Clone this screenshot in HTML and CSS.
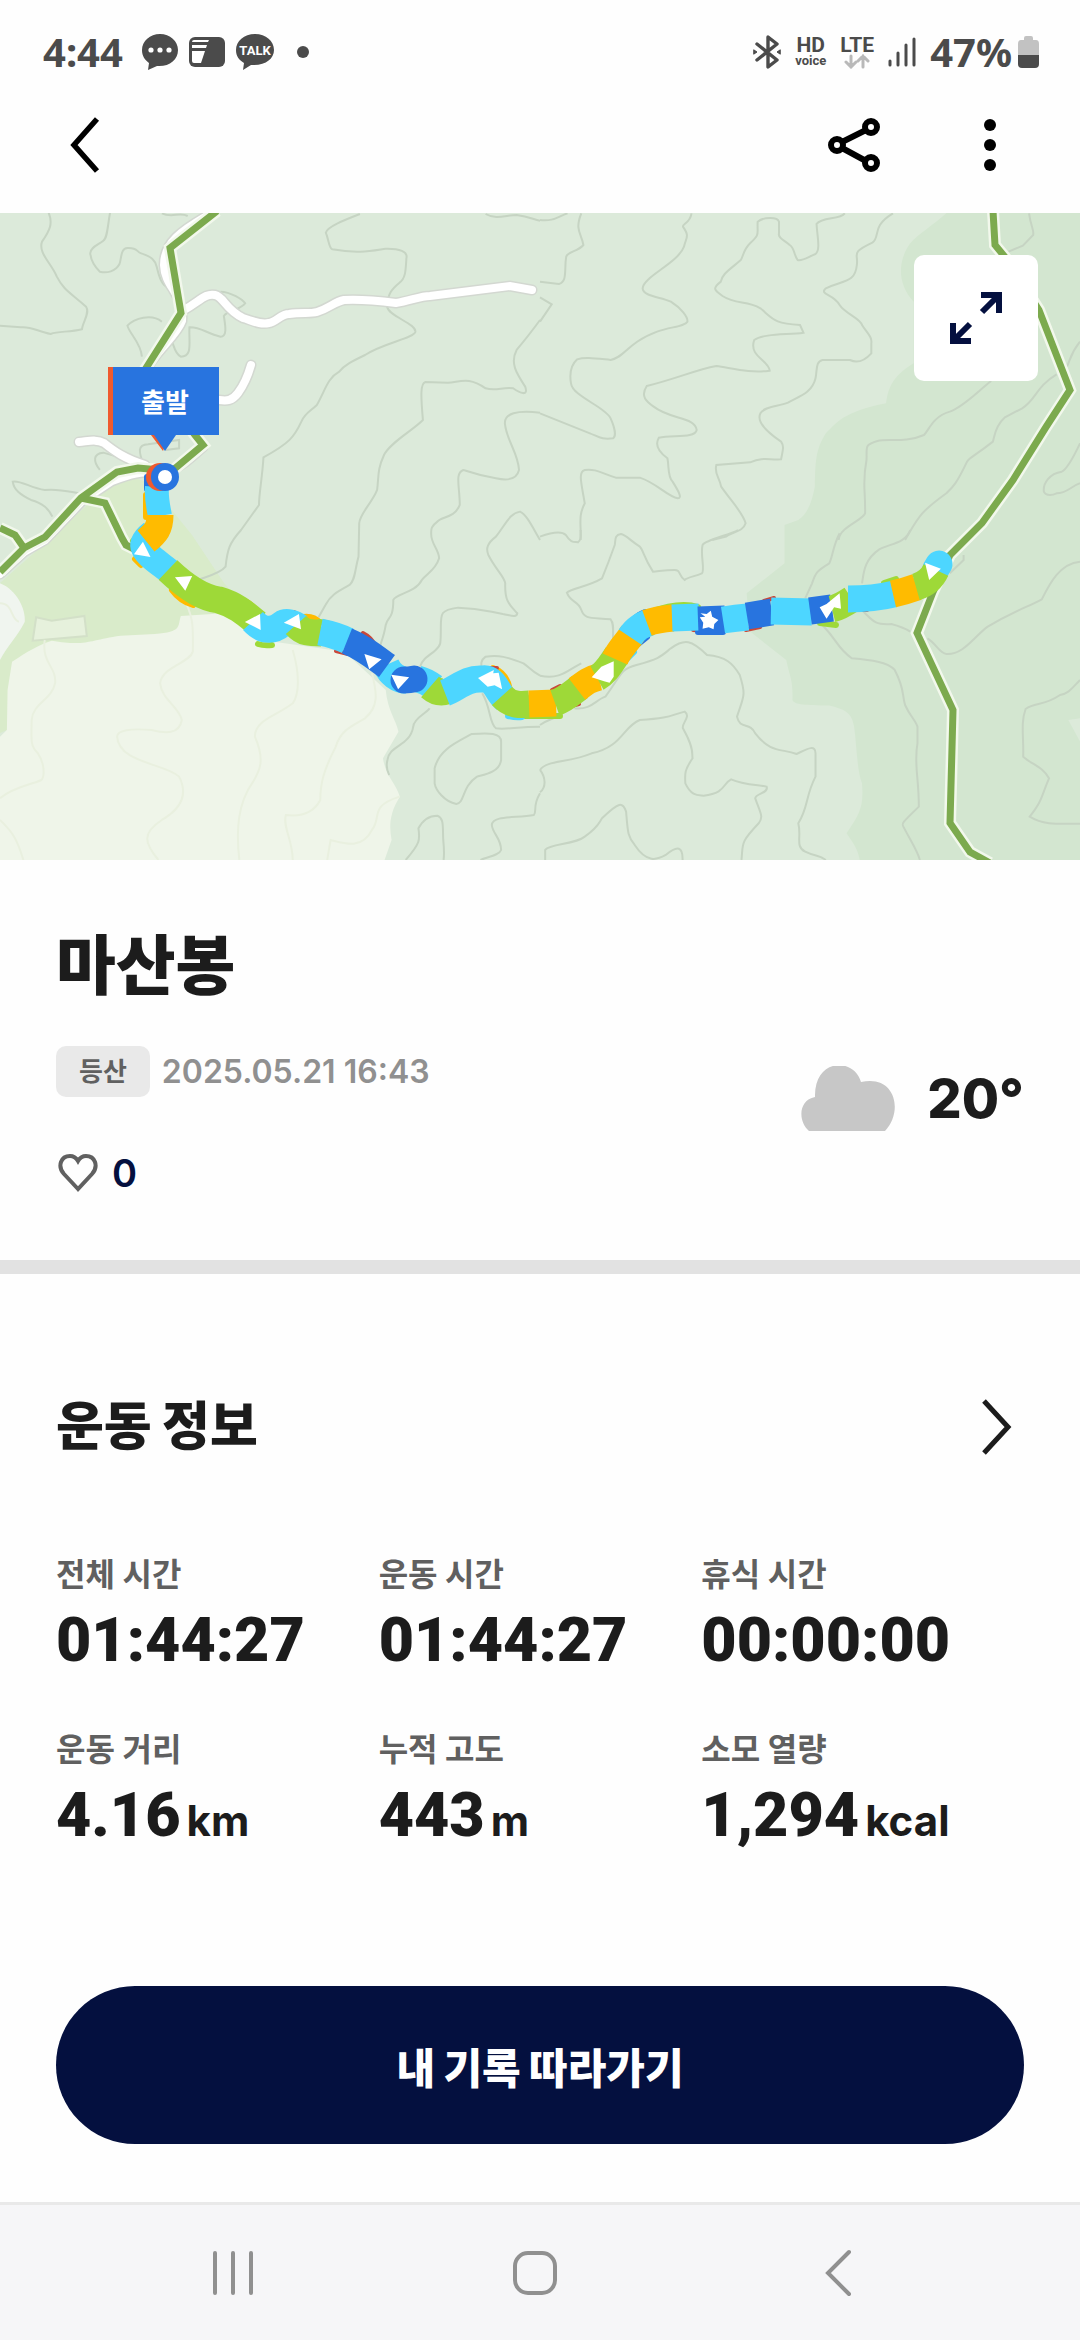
FILE: index.html
```html
<!DOCTYPE html>
<html lang="ko">
<head>
  <meta charset="UTF-8">
  <meta name="viewport" content="width=device-width, initial-scale=1.0">
  <title>마산봉</title>
  <link rel="stylesheet" href="styles.css">
</head>
<body>

<!-- Status bar -->
<div class="status-bar">
  <div class="status-group">
    <span class="status-text clock">4:44</span>
    <svg width="36" height="36" viewBox="0 0 36 36">
      <path d="M18 0C8 0 0 7 0 16c0 6 3 10 7 13L6 36l9-4c12 1 21-6 21-16C36 7 28 0 18 0z" fill="#4b4b4b"/>
      <g fill="#fff"><circle cx="9" cy="16" r="2.6"/><circle cx="18" cy="16" r="2.6"/><circle cx="27" cy="16" r="2.6"/></g>
    </svg>
    <svg width="36" height="30" viewBox="0 0 36 30">
      <rect width="36" height="30" rx="6" fill="#4b4b4b"/>
      <path d="M5 3h15l-1 2H3q0-2 2-2zM3 8h15l-1 3H3zM3 14h13l-4 12H5q-2 0-2-2z" fill="#fff"/>
    </svg>
    <span class="talk">
      <svg width="38" height="36" viewBox="0 0 38 36">
        <path d="M19 0C8 0 0 7 0 16c0 6 3 10 8 13L7 36l8-5c14 1 23-6 23-15C38 7 30 0 19 0z" fill="#4b4b4b"/>
        <text x="19" y="21" text-anchor="middle" class="talk-text">TALK</text>
      </svg>
    </span>
    <span class="more-dot"></span>
  </div>
  <div class="status-group status-right">
    <svg width="28" height="34" viewBox="0 0 28 34" fill="none" stroke="#4b4b4b" stroke-width="3.4" stroke-linejoin="round" stroke-linecap="round">
      <path d="M4 9l20 16-9 7V2l9 7L4 25"/>
      <path d="M1 15l3 2-3 2zM27 15l-3 2 3 2z" fill="#4b4b4b" stroke-width="1"/>
    </svg>
    <span class="net"><span class="net-top">HD</span><span class="net-sub">voice</span></span>
    <span class="net">
      <span class="net-top">LTE</span>
      <svg width="26" height="15" viewBox="0 0 26 15" fill="none" stroke="#b9b9b9" stroke-width="3" stroke-linecap="round">
        <path d="M7 2v11M2 8l5 5 5-5M19 13V2M14 7l5-5 5 5"/>
      </svg>
    </span>
    <svg width="28" height="30" viewBox="0 0 28 30" stroke="#4b4b4b" stroke-width="3" stroke-linecap="round">
      <path d="M2 24v4M10 16v12M18 8v20M26 2v26"/>
    </svg>
    <span class="battery">
      <span class="status-text">47%</span>
      <svg width="21" height="32" viewBox="0 0 21 32">
        <path d="M6 2q0-2 2-2h5q2 0 2 2v2h3q3 0 3 4v12H0V8q0-4 3-4h3z" fill="#c2c2c2"/>
        <path d="M0 19h21v9q0 4-4 4H4q-4 0-4-4z" fill="#4b4b4b"/>
      </svg>
    </span>
  </div>
</div>

<!-- App header -->
<header class="app-header">
  <button type="button" class="icon-btn" aria-label="뒤로">
    <svg width="30" height="56" viewBox="0 0 30 56" fill="none" stroke="#000" stroke-width="5.5"><path d="M27 2L4 28l23 26"/></svg>
  </button>
  <div class="header-actions">
    <button type="button" class="icon-btn" aria-label="공유">
      <svg width="52" height="54" viewBox="0 0 52 54" fill="none" stroke="#000" stroke-width="6">
        <circle cx="9" cy="27" r="6"/><circle cx="43" cy="9" r="6"/><circle cx="43" cy="45" r="6"/>
        <path d="M14 24l24-12M14 30l24 13"/>
      </svg>
    </button>
    <button type="button" class="icon-btn" aria-label="더보기">
      <svg width="12" height="52" viewBox="0 0 12 52"><circle cx="6" cy="6" r="6"/><circle cx="6" cy="26" r="6"/><circle cx="6" cy="46" r="6"/></svg>
    </button>
  </div>
</header>

<main>
  <!-- Route map -->
  <div class="map">
    <svg class="map-canvas" viewBox="0 0 1080 647">
      <rect width="1080" height="647" fill="#dceada"/>

      <!-- land areas -->
      <path d="M52 324L95 285 125 262 150 270 192 322 224 370 260 410 0 520V370z" fill="#d9ebca"/>
      <g transform="matrix(.3444 0 0 .3333 540 -3)">
        <path d="M1190 0C1150 40 1100 70 1075 100C1040 150 1035 220 1085 275V460C1020 500 1010 540 1005 580C880 605 860 640 830 670C800 720 800 750 798 830C790 870 780 910 750 930L710 945V1060L600 1150 610 1265 715 1350C725 1400 735 1410 733 1470C740 1485 770 1485 840 1487C890 1500 905 1510 912 1550C920 1610 920 1680 935 1720C940 1790 930 1810 890 1870C910 1900 925 1920 930 1960H1580V0z" fill="#d3e6d0"/>
        <path d="M1534 1530l34-5v70z" fill="#dceada"/>
      </g>
      <g transform="matrix(.3444 0 0 .3333 0 317)">
        <path d="M0 620L20 600 22 480 35 395C80 365 110 345 150 332C250 350 260 330 350 317L450 312C530 305 515 290 525 258L650 250 760 330 1000 365 1120 480C1125 540 1150 570 1157 605L1112 685C1120 740 1150 760 1161 800C1130 850 1130 890 1137 930L1115 995H0z" fill="#eff5e9"/>
        <path d="M0 160C50 180 75 240 72 275C50 320 20 350 0 390z" fill="#f0f5ef"/>
        <path d="M105 262l45 10 95-14 7 60-157 14z" fill="#e6f1dc" stroke="#d3e0c8" stroke-width="6"/>
      </g>

      <!-- contour lines -->
      <g class="contour" transform="matrix(.3444 0 0 .3333 0 -3)">
        <path d="M140 5C155 40 145 60 122 95C110 130 150 160 165 200C185 240 200 245 250 290C262 310 240 335 238 358C200 368 170 362 147 372C110 365 90 348 60 352L0 347"/>
        <path d="M320 5C312 50 312 85 300 92C285 105 262 112 262 130C265 160 280 175 290 185C310 190 335 185 347 162C353 145 350 115 370 114C400 112 395 125 410 130C440 140 450 150 455 170C462 200 470 230 492 234"/>
        <path d="M470 10C500 25 520 5 545 18"/>
        <path d="M1045 12C1000 30 950 50 946 68C955 90 955 115 965 118C1040 132 1080 122 1120 116C1160 115 1185 125 1180 145C1178 180 1178 205 1160 218C1140 235 1125 250 1124 290C1128 320 1210 340 1206 366C1200 385 1110 400 1060 435C1020 455 1000 465 985 485C950 505 945 540 920 585C900 605 885 610 875 635C855 680 840 700 765 742C762 800 752 850 752 885L700 960C665 1000 660 1020 655 1070C640 1090 600 1100 575 1110"/>
        <path d="M1410 12C1440 30 1470 15 1500 15C1540 20 1550 30 1568 32"/>
        <path d="M1568 330C1540 370 1520 395 1500 420C1480 460 1500 490 1525 530C1535 560 1510 550 1490 535C1460 530 1440 545 1410 535C1360 500 1340 515 1300 518L1235 516C1220 520 1222 560 1228 630C1200 660 1130 700 1115 735C1095 780 1100 800 1095 840C1080 880 1045 910 1043 940L1041 1040C1030 1080 1032 1110 1015 1125C980 1145 960 1155 945 1185L925 1222"/>
        <path d="M1568 608C1500 600 1465 610 1466 640C1470 690 1505 730 1507 780C1500 810 1470 812 1440 805C1380 795 1350 780 1345 780C1320 790 1335 830 1335 885C1320 925 1280 920 1270 935C1250 950 1252 960 1252 970C1250 1000 1275 1020 1275 1045C1265 1080 1240 1090 1225 1110C1205 1150 1150 1150 1142 1170C1142 1230 1125 1220 1120 1245C1115 1280 1105 1300 1100 1320"/>
        <path d="M1568 990C1545 950 1530 915 1510 905C1480 910 1470 940 1440 980C1415 1000 1410 1015 1418 1035C1440 1080 1465 1100 1467 1120C1465 1175 1480 1185 1502 1210C1500 1225 1480 1215 1460 1212C1400 1200 1390 1195 1330 1193C1280 1200 1280 1210 1280 1250C1280 1310 1280 1305 1260 1325C1240 1340 1225 1350 1220 1370"/>
        <path d="M640 245C670 245 705 270 712 280C700 300 660 300 650 318C655 350 660 380 640 380C600 370 580 350 550 352C548 400 560 440 525 440C505 430 505 400 495 385"/>
        <path d="M412 440C410 400 375 370 370 347C390 325 440 310 470 335"/>
        <path d="M152 920C140 895 125 880 90 870C60 855 40 840 37 815C60 810 90 835 130 840C170 835 200 845 240 852"/>
        <path d="M290 780C270 755 270 730 300 728L340 740M420 775C400 720 400 705 430 703L520 690V715L480 720"/>
      </g>
      <g class="contour" transform="matrix(.3444 0 0 .3333 0 317)">
        <path d="M1568 437C1540 420 1535 410 1520 400C1470 380 1450 375 1410 380C1390 395 1400 410 1400 430"/>
        <path d="M1400 490C1425 530 1420 580 1440 595C1470 600 1500 590 1568 590"/>
        <path d="M1370 612C1420 608 1455 608 1455 635V690C1450 730 1400 735 1385 740C1340 770 1350 820 1325 822C1290 815 1265 780 1262 760V715C1275 660 1320 640 1370 612z"/>
        <path d="M1178 990C1220 940 1220 930 1215 895C1230 865 1250 857 1270 857C1290 865 1285 890 1287 930C1290 960 1290 975 1288 990"/>
        <path d="M1568 790C1545 830 1560 845 1550 855C1500 865 1430 855 1428 885C1430 910 1455 925 1455 960C1450 975 1420 980 1395 990"/>
        <path d="M1247 535C1245 545 1200 565 1200 590C1190 650 1130 645 1125 690C1120 710 1125 725 1130 735"/>
      </g>
      <g class="contour contour-pale" transform="matrix(.3444 0 0 .3333 0 317)">
        <path d="M530 200C565 260 560 300 560 365C550 400 470 410 465 460C470 510 520 530 528 570C520 615 480 610 440 600C380 595 340 600 340 620C345 700 480 700 520 740C550 800 520 840 470 870C410 910 420 940 460 990"/>
        <path d="M130 330C120 400 165 410 160 460C150 510 95 520 92 570C90 640 90 650 110 670C130 700 130 740 120 750C90 765 40 770 0 805"/>
        <path d="M850 360C870 430 870 490 850 520C800 560 740 570 740 620C770 690 755 720 735 755C690 820 685 900 695 990"/>
        <path d="M1080 430C1095 490 1100 530 1060 565C1020 590 990 600 975 650C940 720 930 760 930 810C910 850 870 860 830 855C820 890 850 930 850 990"/>
        <path d="M1160 800C1070 830 1110 860 1080 900C1050 960 1000 940 960 930L950 990M0 870C40 910 50 930 68 990M0 220C40 220 30 270 55 275"/>
      </g>
      <g class="contour" transform="matrix(.3444 0 0 .3333 540 -3)">
        <path d="M0 30C40 35 50 20 80 10M120 10C100 60 120 70 126 105C110 125 80 125 76 140C70 180 80 215 55 222L0 215M0 262L34 283 0 335"/>
        <path d="M440 10C435 40 415 40 415 50C435 80 425 80 418 110C400 160 300 200 298 235C300 260 350 260 380 275C410 295 430 320 428 335C420 350 380 350 340 365C250 400 250 440 205 450C160 445 130 440 108 448C90 465 85 490 90 520C95 560 190 590 205 625C220 660 220 680 212 685C180 690 170 680 145 670L0 610"/>
        <path d="M885 10C870 30 820 20 803 42C805 80 815 120 800 132C780 140 760 155 748 150C735 130 740 115 725 105C710 90 690 85 694 70V35C690 20 650 20 632 35C630 75 640 70 610 100C590 120 590 140 583 150C550 180 530 190 525 215C500 235 505 240 530 258C570 285 600 270 640 295C680 330 680 340 755 345L765 368C720 375 650 370 622 390C605 440 665 450 667 482C610 490 560 475 512 468C450 480 400 505 310 528C290 560 310 575 330 590C380 630 450 620 455 660C450 685 390 675 345 683C330 710 350 730 370 745C375 770 370 800 385 815C400 840 415 865 400 865C370 860 340 820 290 803H220C180 790 160 775 130 780C110 785 120 820 130 880C110 920 120 940 118 990"/>
        <path d="M1025 10C960 50 990 80 965 98C900 130 925 130 920 165C915 220 880 210 830 235C810 255 850 250 870 285C885 310 930 325 935 345C950 370 965 380 962 400V430C940 455 920 460 900 450H820C800 455 805 480 800 505C790 550 750 560 720 578C690 590 650 590 640 610C630 630 650 660 700 695C710 710 705 720 700 748C660 750 650 740 610 757L512 765C505 790 520 800 526 830C560 880 590 910 597 940C590 965 560 965 540 980L500 990"/>
        <path d="M1310 513C1270 545 1230 590 1190 605C1140 620 1130 660 1115 675C1060 700 1010 685 980 693C940 705 950 710 948 750C935 820 945 830 944 910C940 930 870 950 867 990"/>
        <path d="M1568 395C1540 430 1540 450 1530 470M1500 493C1440 530 1440 570 1400 595L1350 622C1320 650 1320 680 1315 695C1260 740 1250 740 1240 755C1210 820 1200 830 1180 850C1100 910 1100 920 1060 990"/>
        <path d="M1420 10C1425 50 1435 60 1432 75L1402 107 1360 125M1568 700C1545 750 1525 780 1515 785C1480 790 1460 820 1463 845C1470 860 1490 855 1500 850C1530 850 1540 830 1568 820"/>
      </g>
      <g class="contour" transform="matrix(.3444 0 0 .3333 540 317)">
        <path d="M0 20C40 5 65 5 75 15C90 40 100 35 110 37C120 30 118 20 118 0"/>
        <path d="M575 0C550 15 480 30 472 45C465 75 480 120 470 130C450 140 430 140 420 150C400 135 410 120 390 120C360 120 340 125 328 125C300 80 300 60 290 50C260 30 250 15 235 12C215 15 220 30 217 45C205 80 190 120 180 145C140 170 90 175 78 188C90 220 110 210 120 240C130 270 150 262 205 268C215 280 212 300 212 330"/>
        <path d="M870 10C850 50 850 80 840 100C800 125 800 130 790 160L770 205M1075 0C1060 40 1020 40 985 58C940 90 940 130 935 160"/>
        <path d="M0 437C60 450 80 420 120 400M100 535C150 540 160 510 190 500C240 430 230 420 280 405C350 385 350 380 380 355C420 325 440 330 485 375C540 380 560 400 580 435C600 500 590 500 572 560C580 600 610 575 625 610C670 670 700 655 745 672C770 660 800 640 800 670V740C770 800 780 830 750 880C760 920 740 950 770 965C800 980 810 975 830 990"/>
        <path d="M0 585C20 570 30 570 45 562M0 720C20 690 80 700 150 670C240 650 240 590 290 570C380 565 380 555 420 545C440 560 410 580 415 595C450 660 440 670 443 685C420 720 420 730 422 760C440 800 460 795 475 797C540 790 530 760 555 748C590 765 640 765 658 770C665 790 625 790 625 805C640 850 650 860 635 880C580 940 590 940 585 990"/>
        <path d="M0 720C15 740 20 770 0 787M15 990V960C30 940 100 945 130 920C170 890 170 880 180 865C230 815 240 815 250 845C255 910 255 920 275 945C310 1000 340 990 365 975C400 945 415 950 414 990"/>
        <path d="M820 285C870 340 860 350 905 385C960 390 1010 395 1030 420C1060 480 1050 490 1060 525C1075 560 1090 570 1096 590V640C1085 700 1100 740 1100 830C1050 880 1050 880 1055 890C1080 940 1095 960 1103 990"/>
        <path d="M935 240C970 280 980 285 1020 282C1050 290 1060 295 1075 305M1125 325C1150 340 1160 370 1180 372C1230 375 1260 320 1300 290C1380 240 1420 230 1457 208C1480 160 1510 100 1568 95M1230 75V90L1190 130"/>
        <path d="M1568 450C1540 480 1535 490 1510 495C1460 530 1440 515 1410 537C1395 580 1405 620 1403 680C1430 705 1460 710 1478 745C1455 800 1460 810 1422 860C1460 885 1500 882 1568 881"/>
      </g>

      <!-- minor roads -->
      <g class="road-edge">
        <path d="M184 97C200 88 205 80 215 82C224 84 225 96 243 105C253 108 260 112 269 110C276 109 281 101 289 101C302 99 310 101 317 99C330 95 334 89 344 87C360 86 380 88 396 90C410 88 420 83 430 83L510 73 532 77M251 152C247 166 244 172 238 180C232 188 227 188 219 187M79 229C90 228 96 226 104 230C114 238 125 246 145 252"/>
        <path d="M212 0C180 18 164 30 164 52C165 75 184 80 182 108C176 125 150 142 143 165L180 160"/>
        <path d="M203 234C190 245 180 256 165 259C140 258 130 261 112 268L82 288 45 327 24 339 0 361"/>
      </g>
      <g class="road-white">
        <path d="M184 97C200 88 205 80 215 82C224 84 225 96 243 105C253 108 260 112 269 110C276 109 281 101 289 101C302 99 310 101 317 99C330 95 334 89 344 87C360 86 380 88 396 90C410 88 420 83 430 83L510 73 532 77M251 152C247 166 244 172 238 180C232 188 227 188 219 187M79 229C90 228 96 226 104 230C114 238 125 246 145 252"/>
        <path d="M212 0C180 18 164 30 164 52C165 75 184 80 182 108C176 125 150 142 143 165L180 160"/>
        <path d="M203 234C190 245 180 256 165 259C140 258 130 261 112 268L82 288 45 327 24 339 0 361"/>
      </g>

      <!-- trails -->
      <g class="trail-case">
        <path d="M217-2L170 35 181 100 146 155 195 222 203 232 172 258 138 255 117 259 81 285 45 324 24 335 0 359M81 285l24 5 17 35 4 7 10 5M0 315l15 7 9 13"/>
        <path d="M993-2L995 32 1005 44 1039 97 1070 177 1046 214 1013 267 982 310 950 342 933 379 917 420 953 497 950 610 970 639 990 650"/>
      </g>
      <g class="trail">
        <path d="M217-2L170 35 181 100 146 155 195 222 203 232 172 258 138 255 117 259 81 285 45 324 24 335 0 359M81 285l24 5 17 35 4 7 10 5M0 315l15 7 9 13"/>
        <path d="M993-2L995 32 1005 44 1039 97 1070 177 1046 214 1013 267 982 310 950 342 933 379 917 420 953 497 950 610 970 639 990 650"/>
      </g>

      <!-- earlier passes showing past the edge of the track -->
      <g class="pass">
        <path class="orange" d="M146 282v22M135 346l6 6M172 377Q180 388 193 392M240 386Q250 389 257 398M304 404Q314 403 320 410M493 455Q507 460 510 477"/>
        <path class="green" d="M141 320l-8 8M320 409Q334 411 346 418M258 431Q264 433 272 432M510 503L560 503M650 399Q680 388 698 394M884 370L896 366M820 410l16 2"/>
        <path class="cyan" d="M508 503q8 2 14 1M626 447l8-8"/>
        <path class="red" d="M284 399h10M336 438l12 3M363 420q8 4 12 12M463 462l6-3M489 455l8 0M552 477l8-4M571 493l8-2M693 417l14 1M702 396h13M764 388l10-3M746 417l14-3M859 397h8"/>
        <path class="blue" d="M147 264v12M633 407q6-6 12-8M637 432l10-8M698 419l25 0"/>
      </g>

      <!-- recorded track, coloured by pace -->
      <g class="track">
        <path class="cyan" d="M157 274C156 285 158 292 160 303" stroke-width="24"/>
        <path class="cyan" d="M152 320C134 334 146 340 169 358" stroke-width="26"/>
        <path class="orange" d="M160 302C160 315 156 320 146 328"/>
        <path class="green" d="M168 357C190 378 205 385 219 387C236 392 245 400 257 410"/>
        <path class="cyan" d="M253 408C264 420 275 417 282 411C286 408 294 410 299 414"/>
        <path class="green" d="M296 412C303 420 310 420 321 420"/>
        <path class="cyan" d="M320 419C330 421 340 424 348 428"/>
        <path class="cyan" d="M386 452C390 461 398 467 406 467"/>
        <path class="blue" d="M347 428C362 434 372 442 387 453"/>
        <path class="cyan" d="M418 466Q426 468 434 474"/>
        <path class="blue" d="M404 467Q410 467 414 466" stroke-linecap="round"/>
        <path class="green" d="M430 474Q438 481 447 478"/>
        <path class="cyan" d="M445 480C458 475 466 465 482 466C495 464 497 480 505 486"/>
        <path class="green" d="M502 483C511 493 522 492 530 491"/>
        <path class="orange" d="M529 491L556 490"/>
        <path class="green" d="M555 490C566 486 572 480 580 474"/>
        <path class="orange" d="M577 476C586 469 590 466 599 464"/>
        <path class="green" d="M597 465C606 460 610 452 617 442"/>
        <path class="orange" d="M615 446C620 435 626 431 633 420"/>
        <path class="cyan" d="M630 424C636 415 642 412 650 409"/>
        <path class="orange" d="M647 410C655 407 662 406 673 405"/>
        <path class="cyan" d="M672 405L699 404"/>
        <path class="blue" d="M698 407L725 406"/>
        <path class="cyan" d="M723 407Q736 405 748 404"/>
        <path class="blue" d="M747 403L772 399"/>
        <path class="cyan" d="M771 398L812 399"/>
        <path class="blue" d="M810 398L832 395"/>
        <path class="green" d="M832 396Q840 394 852 386"/>
        <path class="cyan" d="M848 386Q874 386 894 381"/>
        <path class="cyan" d="M936 356l3-5" stroke-linecap="round"/>
        <path class="orange" d="M893 381Q906 378 917 374"/>
        <path class="green" d="M916 374Q930 370 936 357"/>
      </g>

      <!-- direction arrows -->
      <g fill="#fff" transform="matrix(.3444 0 0 .3333 0 317)">
        <path d="M415 35l22 46-48-8zM508 142l50-4-20 44zM755 252l2 48-46-24zM868 252l6 46-50-20zM1058 372l50 16-36 30zM1136 434l52 8-32 36zM1388 444l46-24-2 10 16-2 10 50-22-12-20 4z"/>
      </g>
      <g fill="#fff" transform="matrix(.3444 0 0 .3333 540 317)">
        <path d="M150 442l28-32 36-16v46l-12 18-16-4zM466 250l18 2 12-10 4 18 18 10-12 12-2 16-14-6-18 4 2-18-10-16 16-2zM812 232l20-10 38-32 4 46-20-4-22 34zM1118 98l46 18-34 34z"/>
      </g>

      <!-- start marker -->
      <circle cx="160" cy="264" r="14" fill="#ef5a2e"/>
      <circle cx="165" cy="264" r="14" fill="#2874df"/>
      <circle cx="165" cy="264" r="7" fill="#fff"/>
      <path d="M108 154h106v68h-45l-6 16-12-16h-43z" fill="#ef5a2e"/>
      <path d="M113 154h106v68h-43l-11 16-11-16h-41z" fill="#2874df"/>
      <text x="165" y="199" text-anchor="middle" class="pin-text">출발</text>
    </svg>
    <button type="button" class="expand-btn" aria-label="지도 확대">
      <svg width="60" height="60" viewBox="0 0 60 60" fill="none" stroke="#04103f" stroke-width="6">
        <path d="M35 7h18v18M53 7L36 24M25 53H7V35M7 53l17-17"/>
      </svg>
    </button>
  </div>

  <!-- Summary -->
  <section class="summary">
    <h1>마산봉</h1>
    <div class="summary-row">
      <div class="summary-left">
        <div class="meta">
          <span class="badge">등산</span>
          <time class="date" datetime="2025-05-21T16:43">2025.05.21 16:43</time>
        </div>
        <button type="button" class="like" aria-label="좋아요 0">
          <svg width="40" height="38" viewBox="0 0 40 38" fill="none" stroke="#606060" stroke-width="4">
            <path d="M20 35L6 20C-1 12 3 2 12 2Q17 2 20 7Q23 2 28 2C37 2 41 12 34 20z"/>
          </svg>
          <span>0</span>
        </button>
      </div>
      <div class="weather">
        <svg width="94" height="65" viewBox="0 0 94 65">
          <path d="M8 65C-3 56-3 34 14 31C13-8 53-9 60 16C94 8 103 45 84 65z" fill="#c7c7c7"/>
        </svg>
        <span class="temp">20°</span>
      </div>
    </div>
  </section>

  <!-- Workout info -->
  <section class="workout">
    <a href="#" class="workout-head">
      <h2>운동 정보</h2>
      <svg width="30" height="56" viewBox="0 0 30 56" fill="none" stroke="#1c1c1c" stroke-width="5"><path d="M2 2l24 26L2 54"/></svg>
    </a>
    <dl class="stats">
      <div><dt>전체 시간</dt><dd>01:44:27</dd></div>
      <div><dt>운동 시간</dt><dd>01:44:27</dd></div>
      <div><dt>휴식 시간</dt><dd>00:00:00</dd></div>
      <div><dt>운동 거리</dt><dd>4.16<span class="unit">km</span></dd></div>
      <div><dt>누적 고도</dt><dd>443<span class="unit">m</span></dd></div>
      <div><dt>소모 열량</dt><dd>1,294<span class="unit">kcal</span></dd></div>
    </dl>
    <button type="button" class="follow-btn">내 기록 따라가기</button>
  </section>
</main>

<!-- System navigation -->
<nav class="sys-nav">
  <button type="button" aria-label="최근 앱">
    <svg width="42" height="46" viewBox="0 0 42 46" stroke="#909090" stroke-width="4" stroke-linecap="round"><path d="M3 3v40M21 3v40M39 3v40"/></svg>
  </button>
  <button type="button" aria-label="홈">
    <svg width="46" height="46" viewBox="0 0 46 46" fill="none" stroke="#909090" stroke-width="4"><rect x="3" y="3" width="40" height="40" rx="13"/></svg>
  </button>
  <button type="button" aria-label="이전">
    <svg width="28" height="48" viewBox="0 0 28 48" fill="none" stroke="#909090" stroke-width="4" stroke-linecap="round"><path d="M25 3L4 24l21 21"/></svg>
  </button>
</nav>

</body>
</html>
```

FILE: styles.css
```css
:root {
  --ink: #1c1c1c;
  --navy: #04103f;
  --status: #4b4b4b;
  --side: 56px;
}
* {
  box-sizing: border-box;
  margin: 0;
  padding: 0;
}
body {
  font-family: Inter, "Noto Sans CJK KR", sans-serif;
  background: #fefefe;
  color: var(--ink);
  min-height: 100vh;
  display: flex;
  flex-direction: column;
}
button {
  font-family: inherit;
  background: none;
  border: none;
  cursor: pointer;
}
svg {
  display: block;
  flex-shrink: 0;
}

/* Status bar */
.status-bar {
  height: 104px;
  padding: 0 41px 0 43px;
  display: flex;
  justify-content: space-between;
  align-items: center;
  color: var(--status);
}
.status-group {
  display: flex;
  align-items: center;
  gap: 11px;
}
.status-right {
  gap: 14px;
}
.status-text {
  font-family: "Noto Sans", sans-serif;
  font-size: 40px;
  font-weight: 700;
  line-height: 48px;
}
.clock {
  margin-right: 8px;
}
.talk-text {
  font-family: Roboto, sans-serif;
  font-size: 13px;
  font-weight: 700;
  fill: #fff;
}
.more-dot {
  width: 12px;
  height: 12px;
  margin-left: 12px;
  border-radius: 50%;
  background: var(--status);
}
.net {
  display: flex;
  flex-direction: column;
  align-items: center;
  font-family: Roboto, sans-serif;
  font-weight: 700;
}
.net-top {
  font-size: 21px;
  line-height: 18px;
}
.net-sub {
  font-size: 13px;
  line-height: 14px;
}
.battery {
  display: flex;
  align-items: center;
  gap: 6px;
}

/* Header */
.app-header {
  height: 109px;
  padding: 0 46px 27px 41px;
  display: flex;
  justify-content: space-between;
  align-items: center;
}
.header-actions {
  display: flex;
  gap: 48px;
}
.icon-btn {
  width: 88px;
  height: 82px;
  display: flex;
  justify-content: center;
  align-items: center;
}

/* Map */
.map {
  position: relative;
}
.map-canvas {
  width: 100%;
  height: auto;
}
.contour path {
  fill: none;
  stroke: #c6d4c3;
  stroke-width: 2;
  vector-effect: non-scaling-stroke;
}
.contour-pale path {
  stroke: #e9f0df;
}
.road-edge,
.road-white,
.trail,
.trail-case,
.track,
.pass {
  fill: none;
}
.road-edge {
  stroke: #d3d8d1;
  stroke-width: 11;
  stroke-linecap: round;
}
.road-white {
  stroke: #fff;
  stroke-width: 8;
  stroke-linecap: round;
}
.trail-case {
  stroke: #f2f8ec;
  stroke-width: 12;
}
.trail {
  stroke: #7caa4e;
  stroke-width: 7;
}
.track {
  stroke-width: 27;
}
.pass {
  stroke-width: 6;
  stroke-linecap: round;
}
.cyan {
  stroke: #4dd6ff;
}
.blue {
  stroke: #2874df;
}
.green {
  stroke: #9ed938;
}
.orange {
  stroke: #ffbb00;
}
.red {
  stroke: #c9483a;
  stroke-width: 4;
}
.pin-text {
  font-family: "Noto Sans CJK KR", sans-serif;
  font-size: 26px;
  font-weight: 700;
  fill: #fff;
}
.expand-btn {
  position: absolute;
  top: 42px;
  right: 42px;
  width: 124px;
  height: 126px;
  background: #fff;
  border-radius: 10px;
  display: flex;
  justify-content: center;
  align-items: center;
}

/* Summary */
.summary {
  padding: 66px var(--side) 63px;
  border-bottom: 14px solid #e2e2e2;
}
h1 {
  font-size: 65px;
  font-weight: 900;
  line-height: 80px;
}
.summary-row {
  margin-top: 40px;
  display: flex;
  justify-content: space-between;
  align-items: flex-start;
}
.meta {
  display: flex;
  align-items: center;
  gap: 12px;
}
.badge {
  padding: 0 23px;
  background: #e9e9e9;
  border-radius: 10px;
  color: #606060;
  font-size: 26px;
  font-weight: 700;
  line-height: 51px;
}
.date {
  color: #909090;
  font-size: 32px;
  font-weight: 600;
  line-height: 51px;
}
.like {
  margin-top: 52px;
  padding-left: 2px;
  height: 48px;
  display: flex;
  align-items: center;
  gap: 14px;
  color: var(--navy);
  font-size: 38px;
  font-weight: 600;
}
.weather {
  padding-top: 20px;
  display: flex;
  align-items: center;
  gap: 32px;
}
.temp {
  font-size: 54px;
  font-weight: 800;
  line-height: 64px;
}

/* Workout info */
.workout {
  padding: 123px var(--side) 56px;
}
.workout-head {
  padding-right: 12px;
  display: flex;
  justify-content: space-between;
  align-items: center;
  color: var(--ink);
  text-decoration: none;
}
h2 {
  font-size: 52px;
  font-weight: 900;
  line-height: 60px;
}
.stats {
  margin-top: 98px;
  display: grid;
  grid-template-columns: repeat(3, 1fr);
  row-gap: 58px;
}
dt {
  color: #606060;
  font-size: 32px;
  font-weight: 700;
  line-height: 40px;
}
dd {
  margin-top: 13px;
  font-family: Roboto, sans-serif;
  font-size: 61px;
  font-weight: 900;
  line-height: 64px;
  white-space: nowrap;
}
.unit {
  margin-left: 6px;
  font-family: Inter, sans-serif;
  font-size: 42px;
  font-weight: 700;
  line-height: 42px;
}
.follow-btn {
  margin-top: 139px;
  width: 100%;
  height: 158px;
  border-radius: 79px;
  background: var(--navy);
  color: #fff;
  font-size: 42px;
  font-weight: 900;
}

/* System navigation */
.sys-nav {
  margin-top: auto;
  height: 138px;
  padding: 0 91px 0 82px;
  display: flex;
  background: #f6f6f8;
  border-top: 3px solid #e9e9e9;
}
.sys-nav button {
  flex: 1;
  display: flex;
  justify-content: center;
  align-items: center;
}
```
